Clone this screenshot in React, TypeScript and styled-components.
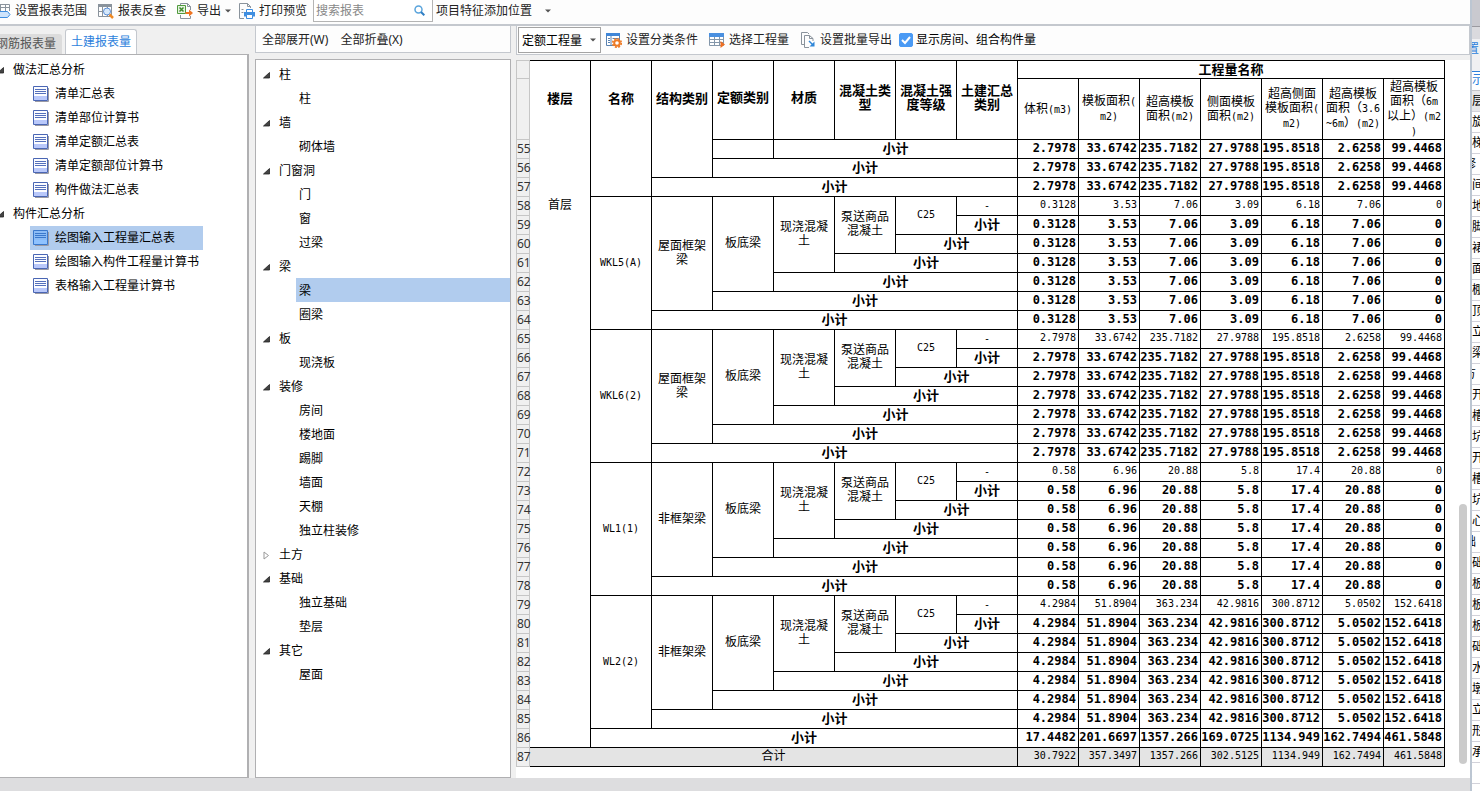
import React, { useState } from "react";
import styled, { createGlobalStyle } from "styled-components";

const GlobalStyle = createGlobalStyle`
  * { box-sizing: border-box; }
  body {
    margin: 0;
    background: #f0f0f0;
    color: #000;
    font: 12px/16px "Noto Sans", "Noto Sans CJK SC", sans-serif;
    overflow: hidden;
  }
  button, input, select { font: inherit; color: inherit; }
`;

/* ---------- page frame ---------- */

const Screen = styled.div`
  display: flex;
  min-height: 100vh;
  overflow: hidden;
`;

const Main = styled.main`
  flex: 1;
  min-width: 0;
  display: flex;
  flex-direction: column;
`;

const TopBar = styled.header`
  display: flex;
  align-items: center;
  height: 26px;
  padding-bottom: 3px;
  overflow: hidden;
  background: #fdfdfd;
  border-bottom: 2px solid #c4c8ce;
`;

const Workspace = styled.div`
  flex: 1;
  display: flex;
  gap: 6px;
`;

const StatusBar = styled.footer`
  height: 13px;
  background: #dddddf;
`;

const ToolButton = styled.button<{ $width?: number; $pull?: boolean }>`
  display: flex;
  align-items: center;
  gap: 4px;
  flex: none;
  width: ${(p) => (p.$width ? `${p.$width}px` : "auto")};
  height: 20px;
  margin-left: ${(p) => (p.$pull ? "-5px" : "0")};
  padding: 0;
  border: 0;
  background: none;
  color: #222;
  white-space: nowrap;

  svg { flex: none; }
`;

const SearchBox = styled.label`
  display: flex;
  align-items: center;
  flex: none;
  width: 120px;
  height: 23px;
  margin-right: 3px;
  padding: 0 7px 0 2px;
  border: 1px solid #b4b4b4;
  border-top: 0;
  background: #fff;

  input {
    flex: 1;
    min-width: 0;
    padding: 2px 0 0;
    border: 0;
    outline: 0;
    background: none;
  }
  input::placeholder { color: #888; opacity: 1; }
`;

/* ---------- left column ---------- */

const ReportColumn = styled.section`
  flex: none;
  width: 249px;
  display: flex;
  flex-direction: column;
`;

const TabStrip = styled.div`
  display: flex;
  align-items: flex-end;
  gap: 3px;
  height: 28px;
  overflow: hidden;
`;

const Tab = styled.button<{ $active?: boolean }>`
  flex: none;
  width: 72px;
  height: ${(p) => (p.$active ? 25 : 20)}px;
  margin-left: ${(p) => (p.$active ? 0 : "-10px")};
  padding: 0 0 0 ${(p) => (p.$active ? 5 : 6)}px;
  border: ${(p) => (p.$active ? "1px solid #c4c8ce" : "0")};
  border-bottom: 0;
  border-radius: 3px 3px 0 0;
  background: ${(p) => (p.$active ? "#fff" : "#dcdcdc")};
  color: ${(p) => (p.$active ? "#2d7fdc" : "#555")};
  text-align: left;
  white-space: nowrap;
`;

const TreePanel = styled.div<{ $flushLeft?: boolean }>`
  flex: 1;
  padding: ${(p) => (p.$flushLeft ? "3px 0 0" : "2px 0 0 7px")};
  border: 1px solid #b0b0b2;
  border-right-width: ${(p) => (p.$flushLeft ? "2px" : "1px")};
  border-left-width: ${(p) => (p.$flushLeft ? "0" : "1px")};
  background: #fff;
`;

const GroupButton = styled.button<{ $flushLeft?: boolean }>`
  display: flex;
  align-items: center;
  gap: 9px;
  width: 100%;
  height: 24px;
  margin-left: ${(p) => (p.$flushLeft ? "-3px" : "0")};
  padding: ${(p) => (p.$flushLeft ? "0" : "2px 0 0")};
  border: 0;
  background: none;
  text-align: left;
`;

const LeafButton = styled.button<{ $selected?: boolean }>`
  display: flex;
  align-items: center;
  gap: 6px;
  width: max-content;
  height: 24px;
  margin-left: 30px;
  padding: 0 28px 0 3px;
  border: 0;
  background: ${(p) => (p.$selected ? "#b1ccee" : "none")};
  white-space: nowrap;
`;

const FilterLeaf = styled.button<{ $selected?: boolean }>`
  display: block;
  width: calc(100% - 33px);
  height: 24px;
  margin-left: 33px;
  padding: 2px 3px 0;
  border: 0;
  background: ${(p) => (p.$selected ? "#b1ccee" : "none")};
  text-align: left;
`;

/* ---------- middle column ---------- */

const FilterColumn = styled.section`
  flex: none;
  width: 256px;
  display: flex;
  flex-direction: column;
  gap: 6px;
`;

const FilterTools = styled.div`
  display: flex;
  align-items: center;
  gap: 12px;
  height: 27px;
  padding: 2px 0 0 6px;
  border: 1px solid #c4c8ce;
  border-top: 0;
  background: #fdfdfd;
`;

/* ---------- report column ---------- */

const ReportArea = styled.section`
  flex: 1;
  min-width: 0;
  display: flex;
  flex-direction: column;
  gap: 5px;
  margin-left: -1px;
`;

const ReportTools = styled.div`
  display: flex;
  align-items: center;
  height: 29px;
  padding-left: 1px;
  border: 1px solid #c4c8ce;
  border-top: 0;
  background: #fdfdfd;
`;

const QuantitySelect = styled.div`
  display: flex;
  align-items: center;
  width: 83px;
  height: 26px;
  margin-right: 5px;
  padding-right: 4px;
  border: 1px solid #a4a4a4;
  background: #fff;

  select {
    flex: 1;
    min-width: 0;
    padding: 2px 0 0 3px;
    border: 0;
    outline: 0;
    appearance: none;
    background: none;
  }
`;

const CheckLabel = styled.label`
  display: flex;
  align-items: center;
  gap: 3px;
  white-space: nowrap;

  input {
    width: 14px;
    height: 14px;
    margin: 0;
    appearance: none;
    border-radius: 2px;
    border: 1px solid #4a9af4;
    background: #fff;
  }
  input:checked {
    background: #4a9af4;
  }
`;

const CheckFrame = styled.span`
  display: grid;
  place-items: center;

  > * { grid-area: 1 / 1; }
  svg { pointer-events: none; z-index: 1; }
`;

const Sheet = styled.div`
  flex: 1;
  display: flex;
  justify-content: space-between;
  background: #fff;
`;

const ScrollTrack = styled.div`
  display: flex;
  align-items: flex-end;
  width: 11px;
  padding: 0 3px 14px 0;
`;

const ScrollThumb = styled.div`
  width: 8px;
  height: 37%;
  border-radius: 4px;
  background: #cbcbcb;
`;

const Grid = styled.table`
  table-layout: fixed;
  width: 929px;
  align-self: flex-start;
  border-collapse: separate;
  border-spacing: 0;
  line-height: 14px;

  col { width: 61px; }
  col:first-child { width: 14px; }

  th, td {
    height: 19px;
    padding: 0;
    border-right: 1px solid #000;
    border-bottom: 1px solid #000;
    text-align: center;
    font-weight: 400;
  }
  td { padding-bottom: 2px; }
  thead tr:first-child th { border-top: 1px solid #000; }
  thead tr:last-child th { height: 61px; }
`;

const RowNumber = styled.th`
  && {
    border: 1px solid #c6c6c6;
    border-top-width: 0;
    background: #f0f0f0;
    color: #333;
    line-height: 18px;
  }
  thead tr:first-child && { border-top: 1px solid #c6c6c6; }
`;

const HeadCell = styled.th<{ $open?: boolean; $tall?: boolean }>`
  &&& {
    font-size: 13px;
    font-weight: 700;
    padding-bottom: ${(p) => (p.$tall ? 6 : 2)}px;
    ${(p) => p.$open && "border-bottom: 0;"}
  }
`;

const FloorCell = styled.td`
  && {
    padding-top: 58px;
    vertical-align: top;
  }
`;

const Subtotal = styled.td`
  && {
    font-size: 13px;
    font-weight: 700;
    line-height: 16px;
  }
`;

const Figure = styled.td<{ $strong?: boolean }>`
  && {
    padding-right: 2px;
    text-align: right;
    font-family: "DejaVu Sans Mono", "Liberation Mono", monospace;
    font-size: ${(p) => (p.$strong ? 12 : 10)}px;
    font-weight: ${(p) => (p.$strong ? 700 : 400)};
  }
`;

const TotalRow = styled.tr`
  td { background: #e4e4e4; }
`;

const Mono = styled.span`
  font-family: "DejaVu Sans Mono", "Liberation Mono", monospace;
  font-size: 10px;
`;

const Line = styled.div`
  white-space: nowrap;
`;

/* ---------- window behind, at the right edge ---------- */

const SideWindow = styled.aside`
  flex: none;
  width: 10px;
  height: 100vh;
  overflow: hidden;
  border-left: 2px solid #bcc6d2;
  background: #fff;
`;

const SideTitle = styled.div`
  height: 27px;
  border-bottom: 1px solid #9a9aa0;
  background: #c9c9cf;
`;

const SideBand = styled.div`
  height: 12px;
  background: #dadade;
`;

const SideTools = styled.div`
  height: 33px;
  padding-top: 2px;
  border-bottom: 1px solid #2d7fdc;
  background: #f0f0f2;
  color: #2d7fdc;
  white-space: nowrap;
  text-indent: -17px;
`;

const SideTab = styled.div`
  height: 19px;
  border-bottom: 1px solid #c4c4c8;
  color: #2d7fdc;
  white-space: nowrap;
  text-indent: -12px;
`;

const SideRow = styled.div<{ $kind?: "head" | "group" }>`
  height: 21px;
  padding-top: 2px;
  border-bottom: 1px solid #d2d2da;
  background: ${(p) => (p.$kind === "head" ? "#e6e6e8" : "#fff")};
  white-space: nowrap;
  text-indent: ${(p) => (p.$kind === "group" ? -20 : -12)}px;
`;

/* ---------- icons ---------- */

const Caret = () => (
  <svg width="6" height="4" viewBox="0 0 6 4"><path d="M0 .5h6L3 3.5z" fill="#555" /></svg>
);

const OpenMark = () => (
  <svg width="7" height="7" viewBox="0 0 7 7"><path d="M6.5.5v5.500h-6z" fill="#444" stroke="#222" strokeWidth=".8" /></svg>
);

const ClosedMark = () => (
  <svg width="7" height="9" viewBox="0 0 7 9"><path d="M1 1l4.500 3.500L1 8z" fill="#fff" stroke="#999" /></svg>
);

const ReportIcon = ({ selected }: { selected?: boolean }) => (
  <svg width="16" height="16" viewBox="0 0 16 16">
    <path d="M2 15.500h13.500V2" fill="none" stroke="#9a9aa4" />
    <path d="M.5.5h14v14H.5z" fill={selected ? "#8cbcf6" : "#fbfcff"} stroke={selected ? "#3a78cc" : "#4a66b4"} />
    <path d="M1 10h13v4H1z" fill={selected ? "#8fc2ff" : "#b9c8fa"} />
    <path d="M2 3.500h11M2 5.500h11M2 7.500h11" stroke={selected ? "#3a78cc" : "#5470bc"} />
  </svg>
);

const RangeIcon = () => (
  <svg width="16" height="16" viewBox="0 0 16 16" fill="none">
    <path d="M.5 8V1.500h14V8M.5 4.500h14M5.500 1.500V8M10.500 1.500V8" stroke="#8a939c" />
    <path d="M3.500 8.500h9l2.500 3-2.500 3h-9l-2-3z" fill="#cfe4fb" stroke="#3f8ee0" />
  </svg>
);

const TraceIcon = () => (
  <svg width="16" height="16" viewBox="0 0 16 16" fill="none">
    <path d="M.5 1.500h13v12H.5zM.5 8.500h13M4.500 4v10M9.500 4v10" stroke="#8a939c" />
    <path d="M0 1h14v3H0z" fill="#8a939c" />
    <circle cx="9" cy="8.500" r="3.500" fill="#d5e8fb" stroke="#5c8fd6" />
    <path d="M11.500 11.500l3.500 3.500" stroke="#f08a24" strokeWidth="2.500" />
  </svg>
);

const ExportIcon = () => (
  <svg width="16" height="16" viewBox="0 0 16 16" fill="none">
    <path d="M3.500 3V.5h7l3 3V7M3.500 12v3.500h10V13M10.500.5v3h3" stroke="#8a939c" />
    <path d="M.5 2.500h8v8h-8z" fill="#e4f2df" stroke="#4f9a3c" />
    <path d="M2.500 4.500l4 4M6.500 4.500l-4 4" stroke="#3e8a2c" strokeWidth="1.500" />
    <path d="M8.500 10h4" stroke="#ee7422" strokeWidth="2" />
    <path d="M12 6.500l4 3.500-4 3.500z" fill="#ee7422" />
  </svg>
);

const PrintIcon = () => (
  <svg width="16" height="16" viewBox="0 0 16 16" fill="none">
    <path d="M5 15.500H.5V.5h8l3 3V5M8.500.5v3h3" stroke="#8a939c" />
    <path d="M2.500 6.500h2M2.500 9.500h2" stroke="#8a939c" />
    <path d="M7.500 9V6.500h6V9" fill="#fff" stroke="#3f8ee0" />
    <path d="M5 9h11v4.500H5z" fill="#3f8ee0" />
    <path d="M7.500 11.500h6v4h-6z" fill="#fff" stroke="#3f8ee0" />
  </svg>
);

const SearchIcon = () => (
  <svg width="11" height="11" viewBox="0 0 11 11" fill="none">
    <circle cx="4.500" cy="4.500" r="3.500" stroke="#5aa4dc" strokeWidth="1.500" />
    <path d="M7 7l3.300 3.300" stroke="#2f7fc4" strokeWidth="2" />
  </svg>
);

const ClassifyIcon = () => (
  <svg width="16" height="16" viewBox="0 0 16 16" fill="none">
    <path d="M.5 1.500h13v12H.5zM5 4v10" fill="#fff" stroke="#5a82b0" />
    <path d="M0 1h14v3H0z" fill="#3f86d8" />
    <path d="M2 6.500h2M2 8.500h2M2 10.500h2M6.500 6.500h6" stroke="#5a82b0" />
    <circle cx="11" cy="11" r="4.300" stroke="#ee7b26" strokeWidth="1.600" strokeDasharray="2 1.380" />
    <circle cx="11" cy="11" r="2.800" fill="#fff" stroke="#ee7b26" strokeWidth="2" />
  </svg>
);

const PickIcon = () => (
  <svg width="16" height="16" viewBox="0 0 16 16" fill="none">
    <path d="M.5 2.500h14v11H.5zM.5 7.500h14M.5 10.500h14M5.500 5v9M10.500 5v9" fill="#fff" stroke="#8497aa" />
    <path d="M0 1h15v4H0z" fill="#4a90e0" />
    <path d="M11.500 9l4.500 3.500-4.500 3.500z" fill="#ee6f22" />
  </svg>
);

const BatchIcon = () => (
  <svg width="15" height="16" viewBox="0 0 15 16" fill="none">
    <path d="M3 12.500H.5V.5h6L8 2" stroke="#8a939c" />
    <path d="M8 15.500H3.500v-12h5l3.500 3V9M8.500 3.500v3H12" stroke="#8a939c" />
    <path d="M8 9l4 4" stroke="#2f86d8" strokeWidth="1.500" />
    <path d="M13.500 9.500v5h-5z" fill="#2f86d8" />
  </svg>
);

const Tick = () => (
  <svg width="14" height="14" viewBox="0 0 14 14" fill="none">
    <path d="M3 7l3 3 5-6" stroke="#fff" strokeWidth="2" />
  </svg>
);

/* ---------- data ---------- */

const REPORTS = [
  { name: "做法汇总分析", items: ["清单汇总表", "清单部位计算书", "清单定额汇总表", "清单定额部位计算书", "构件做法汇总表"] },
  { name: "构件汇总分析", items: ["绘图输入工程量汇总表", "绘图输入构件工程量计算书", "表格输入工程量计算书"] },
];

const COMPONENTS = [
  { name: "柱", items: ["柱"] },
  { name: "墙", items: ["砌体墙"] },
  { name: "门窗洞", items: ["门", "窗", "过梁"] },
  { name: "梁", items: ["梁", "圈梁"] },
  { name: "板", items: ["现浇板"] },
  { name: "装修", items: ["房间", "楼地面", "踢脚", "墙面", "天棚", "独立柱装修"] },
  { name: "土方", items: [] },
  { name: "基础", items: ["独立基础", "垫层"] },
  { name: "其它", items: ["屋面"] },
];

const KEY_HEADS = [["楼层"], ["名称"], ["结构类别"], ["定额类别"], ["材质"], ["混凝土类", "型"], ["混凝土强", "度等级"], ["土建汇总", "类别"]];

const VALUE_HEADS = [
  ["体积(m3)"],
  ["模板面积(", "m2)"],
  ["超高模板", "面积(m2)"],
  ["侧面模板", "面积(m2)"],
  ["超高侧面", "模板面积(", "m2)"],
  ["超高模板", "面积（3.6", "~6m）(m2)"],
  ["超高模板", "面积（6m", "以上）(m2", ")"],
];

const FIRST = ["2.7978", "33.6742", "235.7182", "27.9788", "195.8518", "2.6258", "99.4468"];

const BEAMS = [
  { start: 58, name: "WKL5(A)", kind: ["屋面框架", "梁"], values: ["0.3128", "3.53", "7.06", "3.09", "6.18", "7.06", "0"] },
  { start: 65, name: "WKL6(2)", kind: ["屋面框架", "梁"], values: FIRST },
  { start: 72, name: "WL1(1)", kind: ["非框架梁"], values: ["0.58", "6.96", "20.88", "5.8", "17.4", "20.88", "0"] },
  { start: 79, name: "WL2(2)", kind: ["非框架梁"], values: ["4.2984", "51.8904", "363.234", "42.9816", "300.8712", "5.0502", "152.6418"] },
];

const FLOOR_TOTAL = ["17.4482", "201.6697", "1357.266", "169.0725", "1134.949", "162.7494", "461.5848"];
const GRAND_TOTAL = ["30.7922", "357.3497", "1357.266", "302.5125", "1134.949", "162.7494", "461.5848"];

const SIDE_ROWS: { text: string; kind?: "head" | "group" }[] = [
  { text: "楼层", kind: "head" },
  { text: "螺旋" }, { text: "楼梯" }, { text: "装修", kind: "group" },
  { text: "房间" }, { text: "楼地" }, { text: "踢脚" }, { text: "墙裙" }, { text: "墙面" },
  { text: "天棚" }, { text: "吊顶" }, { text: "独立" }, { text: "单梁" }, { text: "土方", kind: "group" },
  { text: "大开" }, { text: "基槽" }, { text: "基坑" }, { text: "大开" }, { text: "基槽" },
  { text: "基坑" }, { text: "房心" }, { text: "基础", kind: "group" }, { text: "基础" },
  { text: "筏板" }, { text: "筏板" }, { text: "筏板" }, { text: "基础" }, { text: "集水" },
  { text: "柱墩" }, { text: "独立" }, { text: "条形" }, { text: "桩承" }, { text: "桩" },
];

/* ---------- table parts ---------- */

const Mixed = ({ text }: { text: string }) => (
  <>
    {text.split(/([\x20-\x7e]+)/).filter(Boolean).map((part, i) =>
      part.charCodeAt(0) < 128 ? <Mono key={i}>{part}</Mono> : part
    )}
  </>
);

const Lines = ({ lines }: { lines: string[] }) => (
  <>{lines.map((line, i) => <Line key={i}><Mixed text={line} /></Line>)}</>
);

const Figures = ({ values, strong }: { values: string[]; strong?: boolean }) => (
  <>{values.map((v, i) => <Figure key={i} $strong={strong}>{v}</Figure>)}</>
);

const BeamRows = ({ start, name, kind, values }: (typeof BEAMS)[number]) => (
  <>
    <tr>
      <RowNumber scope="row">{start}</RowNumber>
      <td rowSpan={7}><Mixed text={name} /></td>
      <td rowSpan={6}><Lines lines={kind} /></td>
      <td rowSpan={5}>板底梁</td>
      <td rowSpan={4}><Lines lines={["现浇混凝", "土"]} /></td>
      <td rowSpan={3}><Lines lines={["泵送商品", "混凝土"]} /></td>
      <td rowSpan={2}><Mixed text="C25" /></td>
      <td><Mixed text="-" /></td>
      <Figures values={values} />
    </tr>
    {[1, 2, 3, 4, 5, 6].map((n) => (
      <tr key={n}>
        <RowNumber scope="row">{start + n}</RowNumber>
        <Subtotal colSpan={n}>小计</Subtotal>
        <Figures values={values} strong />
      </tr>
    ))}
  </>
);

const QuantityTable = () => (
  <Grid>
    <colgroup>{Array.from({ length: 16 }, (_, i) => <col key={i} />)}</colgroup>
    <thead>
      <tr>
        <RowNumber />
        {KEY_HEADS.map((lines, i) => (
          <HeadCell key={i} rowSpan={2} $tall $open={i < 3}><Lines lines={lines} /></HeadCell>
        ))}
        <HeadCell colSpan={7}>工程量名称</HeadCell>
      </tr>
      <tr>
        <RowNumber />
        {VALUE_HEADS.map((lines, i) => <th key={i}><Lines lines={lines} /></th>)}
      </tr>
    </thead>
    <tbody>
      <tr>
        <RowNumber scope="row">55</RowNumber>
        <FloorCell rowSpan={32}>首层</FloorCell>
        <td rowSpan={3} />
        <td rowSpan={2} />
        <td />
        <Subtotal colSpan={4}>小计</Subtotal>
        <Figures values={FIRST} strong />
      </tr>
      <tr>
        <RowNumber scope="row">56</RowNumber>
        <Subtotal colSpan={5}>小计</Subtotal>
        <Figures values={FIRST} strong />
      </tr>
      <tr>
        <RowNumber scope="row">57</RowNumber>
        <Subtotal colSpan={6}>小计</Subtotal>
        <Figures values={FIRST} strong />
      </tr>
      {BEAMS.map((beam) => <BeamRows key={beam.name} {...beam} />)}
      <tr>
        <RowNumber scope="row">86</RowNumber>
        <Subtotal colSpan={7}>小计</Subtotal>
        <Figures values={FLOOR_TOTAL} strong />
      </tr>
      <TotalRow>
        <RowNumber scope="row">87</RowNumber>
        <td colSpan={8}>合计</td>
        <Figures values={GRAND_TOTAL} />
      </TotalRow>
    </tbody>
  </Grid>
);

/* ---------- page ---------- */

export default function App() {
  const [report, setReport] = useState("绘图输入工程量汇总表");
  const [picked, setPicked] = useState("梁/梁");
  const [showRooms, setShowRooms] = useState(true);

  return (
    <>
      <GlobalStyle />
      <Screen>
        <Main>
          <TopBar>
            <ToolButton $width={103} $pull><RangeIcon />设置报表范围</ToolButton>
            <ToolButton $width={79}><TraceIcon />报表反查</ToolButton>
            <ToolButton $width={62}><ExportIcon />导出<Caret /></ToolButton>
            <ToolButton $width={74}><PrintIcon />打印预览</ToolButton>
            <SearchBox>
              <input type="text" placeholder="搜索报表" aria-label="搜索报表" />
              <SearchIcon />
            </SearchBox>
            <ToolButton $width={109}>项目特征添加位置</ToolButton>
            <Caret />
          </TopBar>

          <Workspace>
            <ReportColumn>
              <TabStrip>
                <Tab>钢筋报表量</Tab>
                <Tab $active>土建报表量</Tab>
              </TabStrip>
              <TreePanel $flushLeft>
                {REPORTS.map((group) => (
                  <React.Fragment key={group.name}>
                    <GroupButton $flushLeft><OpenMark />{group.name}</GroupButton>
                    {group.items.map((item) => (
                      <LeafButton key={item} $selected={item === report} onClick={() => setReport(item)}>
                        <ReportIcon selected={item === report} />{item}
                      </LeafButton>
                    ))}
                  </React.Fragment>
                ))}
              </TreePanel>
            </ReportColumn>

            <FilterColumn>
              <FilterTools>
                <ToolButton>全部展开(W)</ToolButton>
                <ToolButton>全部折叠(X)</ToolButton>
              </FilterTools>
              <TreePanel>
                {COMPONENTS.map((group) => (
                  <React.Fragment key={group.name}>
                    <GroupButton>{group.items.length ? <OpenMark /> : <ClosedMark />}{group.name}</GroupButton>
                    {group.items.map((item) => {
                      const id = `${group.name}/${item}`;
                      return (
                        <FilterLeaf key={id} $selected={id === picked} onClick={() => setPicked(id)}>{item}</FilterLeaf>
                      );
                    })}
                  </React.Fragment>
                ))}
              </TreePanel>
            </FilterColumn>

            <ReportArea>
              <ReportTools>
                <QuantitySelect>
                  <select aria-label="工程量类型"><option>定额工程量</option></select>
                  <Caret />
                </QuantitySelect>
                <ToolButton $width={103}><ClassifyIcon />设置分类条件</ToolButton>
                <ToolButton $width={92}><PickIcon />选择工程量</ToolButton>
                <ToolButton $width={98}><BatchIcon />设置批量导出</ToolButton>
                <CheckLabel>
                  <CheckFrame>
                    <input type="checkbox" checked={showRooms} onChange={(e) => setShowRooms(e.target.checked)} />
                    {showRooms && <Tick />}
                  </CheckFrame>
                  显示房间、组合构件量
                </CheckLabel>
              </ReportTools>
              <Sheet>
                <QuantityTable />
                <ScrollTrack><ScrollThumb /></ScrollTrack>
              </Sheet>
            </ReportArea>
          </Workspace>
          <StatusBar />
        </Main>

        <SideWindow>
          <SideTitle />
          <SideBand />
          <SideTools>设置</SideTools>
          <SideTab>显示</SideTab>
          {SIDE_ROWS.map((row, i) => <SideRow key={i} $kind={row.kind}>{row.text}</SideRow>)}
        </SideWindow>
      </Screen>
    </>
  );
}
